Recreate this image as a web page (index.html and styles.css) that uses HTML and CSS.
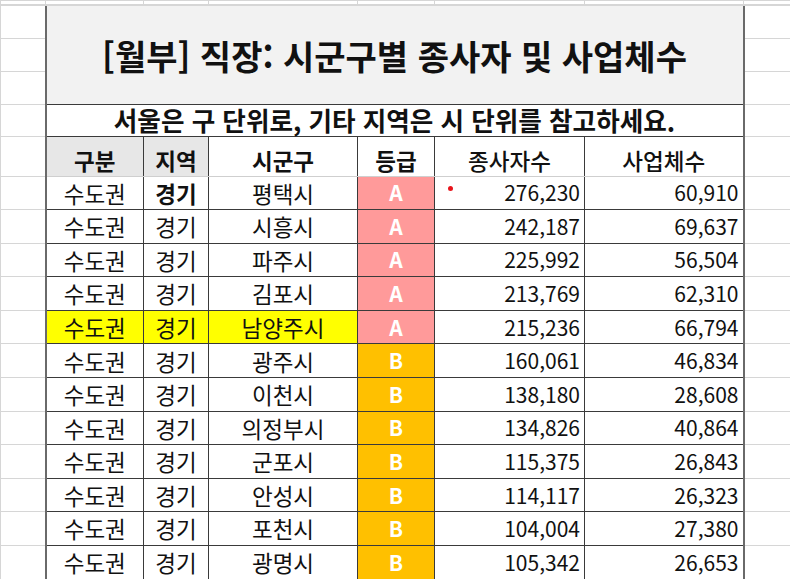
FILE: index.html
```html
<!DOCTYPE html>
<html lang="ko">
<head>
<meta charset="utf-8">
<title>[월부] 직장: 시군구별 종사자 및 사업체수</title>
<link rel="stylesheet" href="styles.css">
</head>
<body>
<table class="sheet">
  <colgroup>
    <col class="w0"><col class="w1"><col class="w2"><col class="w3"><col class="w4"><col class="w5"><col class="w6"><col class="w7">
  </colgroup>
  <tr class="r-top">
    <td></td><td></td><td></td><td></td><td></td><td></td><td></td><td></td>
  </tr>
  <tr class="r-title">
    <td class="blank"></td>
    <td class="title edge-l edge-r" colspan="6" rowspan="3">[월부] 직장: 시군구별 종사자 및 사업체수</td>
    <td class="blank"></td>
  </tr>
  <tr class="r-title"><td class="blank"></td><td class="blank"></td></tr>
  <tr class="r-title"><td class="blank"></td><td class="blank"></td></tr>
  <tr class="r-sub">
    <td class="blank"></td>
    <td class="sub edge-l edge-r" colspan="6">서울은 구 단위로, 기타 지역은 시 단위를 참고하세요.</td>
    <td class="blank"></td>
  </tr>
  <tr class="r-head">
    <td class="blank"></td>
    <td class="hd grey edge-l">구분</td>
    <td class="hd grey">지역</td>
    <td class="hd">시군구</td>
    <td class="hd">등급</td>
    <td class="hd light">종사자수</td>
    <td class="hd light edge-r">사업체수</td>
    <td class="blank"></td>
  </tr>
  <tr class="r-data">
    <td class="blank"></td><td class="c edge-l">수도권</td><td class="c b">경기</td><td class="c">평택시</td><td class="grade ga">A</td><td class="num note"><span class="dot"></span>276,230</td><td class="num edge-r">60,910</td><td class="blank"></td>
  </tr>
  <tr class="r-data">
    <td class="blank"></td><td class="c edge-l">수도권</td><td class="c">경기</td><td class="c">시흥시</td><td class="grade ga">A</td><td class="num">242,187</td><td class="num edge-r">69,637</td><td class="blank"></td>
  </tr>
  <tr class="r-data">
    <td class="blank"></td><td class="c edge-l">수도권</td><td class="c">경기</td><td class="c">파주시</td><td class="grade ga">A</td><td class="num">225,992</td><td class="num edge-r">56,504</td><td class="blank"></td>
  </tr>
  <tr class="r-data">
    <td class="blank"></td><td class="c edge-l">수도권</td><td class="c">경기</td><td class="c">김포시</td><td class="grade ga">A</td><td class="num">213,769</td><td class="num edge-r">62,310</td><td class="blank"></td>
  </tr>
  <tr class="r-data">
    <td class="blank"></td><td class="c hl edge-l">수도권</td><td class="c hl">경기</td><td class="c hl">남양주시</td><td class="grade ga">A</td><td class="num">215,236</td><td class="num edge-r">66,794</td><td class="blank"></td>
  </tr>
  <tr class="r-data">
    <td class="blank"></td><td class="c edge-l">수도권</td><td class="c">경기</td><td class="c">광주시</td><td class="grade gb">B</td><td class="num">160,061</td><td class="num edge-r">46,834</td><td class="blank"></td>
  </tr>
  <tr class="r-data">
    <td class="blank"></td><td class="c edge-l">수도권</td><td class="c">경기</td><td class="c">이천시</td><td class="grade gb">B</td><td class="num">138,180</td><td class="num edge-r">28,608</td><td class="blank"></td>
  </tr>
  <tr class="r-data">
    <td class="blank"></td><td class="c edge-l">수도권</td><td class="c">경기</td><td class="c">의정부시</td><td class="grade gb">B</td><td class="num">134,826</td><td class="num edge-r">40,864</td><td class="blank"></td>
  </tr>
  <tr class="r-data">
    <td class="blank"></td><td class="c edge-l">수도권</td><td class="c">경기</td><td class="c">군포시</td><td class="grade gb">B</td><td class="num">115,375</td><td class="num edge-r">26,843</td><td class="blank"></td>
  </tr>
  <tr class="r-data">
    <td class="blank"></td><td class="c edge-l">수도권</td><td class="c">경기</td><td class="c">안성시</td><td class="grade gb">B</td><td class="num">114,117</td><td class="num edge-r">26,323</td><td class="blank"></td>
  </tr>
  <tr class="r-data">
    <td class="blank"></td><td class="c edge-l">수도권</td><td class="c">경기</td><td class="c">포천시</td><td class="grade gb">B</td><td class="num">104,004</td><td class="num edge-r">27,380</td><td class="blank"></td>
  </tr>
  <tr class="r-data">
    <td class="blank"></td><td class="c edge-l">수도권</td><td class="c">경기</td><td class="c">광명시</td><td class="grade gb">B</td><td class="num">105,342</td><td class="num edge-r">26,653</td><td class="blank"></td>
  </tr>
</table>
</body>
</html>
```
FILE: styles.css
```css
html, body {
  margin: 0;
  padding: 0;
  background: #ffffff;
  overflow: hidden;
}
body {
  font-family: "Noto Sans CJK KR", "Noto Sans", sans-serif;
  color: #111111;
}
.sheet {
  border-collapse: collapse;
  table-layout: fixed;
  width: 790px;
}
.w0 { width: 45px; }
.w1 { width: 98px; }
.w2 { width: 65px; }
.w3 { width: 149px; }
.w4 { width: 77px; }
.w5 { width: 150px; }
.w6 { width: 159px; }
.w7 { width: 47px; }

.sheet td {
  padding: 0;
  line-height: 1;
  white-space: nowrap;
  overflow: hidden;
  font-size: 22.5px;
  border: 1px solid #3a3a3a;
  vertical-align: middle;
}
.sheet td.blank {
  border: 1px solid #d6d6d6;
}
.r-top td {
  height: 3px;
  border: 1px solid #d6d6d6;
  border-bottom: 2px solid #d6d6d6;
}
.r-title td { height: 32px; }
.r-sub td { height: 30.5px; }
.r-head td { height: 35px; }
.r-data td { height: 32.6px; }

.sheet td.edge-l { border-left: 2px solid #6a6a6a; }
.sheet td.edge-r { border-right: 2px solid #6a6a6a; }

.sheet td.title {
  background: #f2f2f2;
  text-align: center;
  font-size: 34px;
  font-weight: 700;
  padding-top: 2px;
}
.sheet td.sub {
  text-align: center;
  font-size: 25.6px;
  font-weight: 700;
  overflow: visible;
}
.sheet td.hd {
  text-align: center;
  font-weight: 700;
  vertical-align: bottom;
  padding-bottom: 4px;
  border-bottom-color: #cfcfcf;
}
.sheet td.hd.light { font-weight: 500; }
.sheet td.grey { background: #e7e7e7; }

.sheet td.c { text-align: center; }
.sheet td.b { font-weight: 700; }
.sheet td.hl { background: #ffff00; }
.sheet td.num {
  text-align: right;
  padding-right: 4px;
  font-size: 21px;
}
.sheet td.grade {
  text-align: center;
  color: #ffffff;
  font-weight: 700;
  font-size: 21px;
}
.sheet td.ga { background: #ff9a9a; }
.sheet td.gb { background: #ffc000; }

.sheet td.note { position: relative; }
.dot {
  position: absolute;
  left: 13px;
  top: 9px;
  width: 5px;
  height: 5px;
  border-radius: 50%;
  background: #e8141b;
}
```
